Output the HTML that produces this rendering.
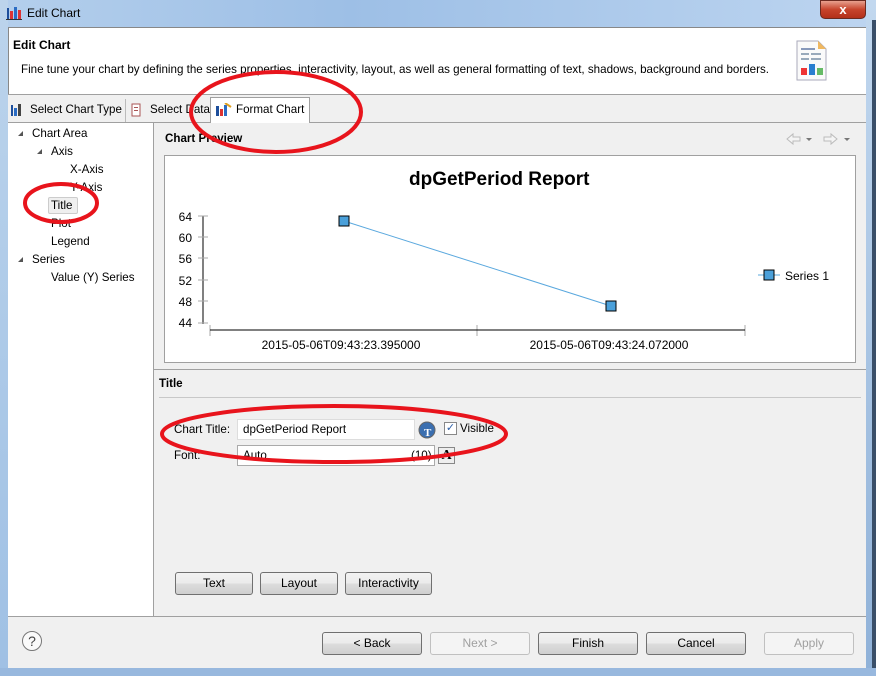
<!DOCTYPE html>
<html><head><meta charset="utf-8"><style>
*{margin:0;padding:0;box-sizing:border-box}
body{width:876px;height:676px;position:relative;overflow:hidden;font-family:"Liberation Sans","DejaVu Sans",sans-serif;font-size:12px;color:#000;background:#f0f0f0}
.a{position:absolute}
.btn{position:absolute;height:23px;border:1px solid #707070;border-radius:3px;background:linear-gradient(#f2f2f2,#ebebeb 50%,#dddddd 51%,#cfcfcf);text-align:center;line-height:21px;font-size:12px}
.dis{color:#a0a0a0;border-color:#c0c0c0;background:#f4f4f4}
.t{position:absolute;font-size:11.6px;white-space:nowrap}
.tri{position:absolute;width:0;height:0;border-left:5px solid transparent;border-bottom:5px solid #555}
</style></head><body>
<!-- frame -->
<div class="a" style="left:0;top:0;width:876px;height:27px;background:linear-gradient(90deg,#b4cfec,#9dbfe6 40%,#bdd5f0)"></div>
<div class="a" style="left:0;top:0;width:8px;height:676px;background:linear-gradient(#bcd4ec,#9fc0e4)"></div>
<div class="a" style="left:866px;top:0;width:10px;height:676px;background:linear-gradient(#c2d8ef,#8fb1d8)"></div>
<div class="a" style="left:872px;top:20px;width:4px;height:656px;background:#3a4f69"></div>
<div class="a" style="left:0;top:668px;width:876px;height:8px;background:#98b8de"></div>
<svg class="a" style="left:6px;top:5px" width="16" height="16"><rect x="1" y="3" width="2" height="12" fill="#1e4f9c"/><rect x="4" y="6" width="3" height="9" fill="#d33"/><rect x="8" y="2" width="3" height="13" fill="#2b6cc4"/><rect x="12" y="5" width="3" height="10" fill="#d33"/><rect x="0" y="14" width="16" height="1" fill="#333"/></svg>
<div class="t" style="left:27px;top:6px;font-size:12px">Edit Chart</div>
<div class="a" style="left:820px;top:0;width:46px;height:19px;border-radius:0 0 5px 5px;background:linear-gradient(#e8a08e,#c7442c 50%,#b3301a);border:1px solid #6b2a20;color:#fff;font-weight:bold;text-align:center;line-height:17px;font-size:13px">x</div>
<!-- header -->
<div class="a" style="left:8px;top:27px;width:858px;height:67px;background:#fff;border-top:1px solid #888;border-left:1px solid #888"></div>
<div class="t" style="left:13px;top:38px;font-weight:bold;font-size:12px">Edit Chart</div>
<div class="t" style="left:21px;top:63px">Fine tune your chart by defining the series properties, interactivity, layout, as well as general formatting of text, shadows, background and borders.</div>
<svg class="a" style="left:796px;top:40px" width="32" height="42"><path d="M1 1H22L30 9V40H1Z" fill="#fafafa" stroke="#aab"/><path d="M22 1V9H30" fill="#f0b860"/><rect x="5" y="8" width="14" height="2" fill="#8899bb"/><rect x="5" y="13" width="8" height="2" fill="#9ab"/><rect x="15" y="13" width="10" height="2" fill="#9ab"/><rect x="5" y="18" width="8" height="2" fill="#9ab"/><rect x="15" y="18" width="10" height="2" fill="#9ab"/><rect x="5" y="28" width="6" height="7" fill="#e33"/><rect x="13" y="24" width="6" height="11" fill="#2a7fd0"/><rect x="21" y="28" width="6" height="7" fill="#6b6"/></svg>
<div class="a" style="left:8px;top:94px;width:858px;height:1px;background:#a0a0a0"></div>
<!-- tabs -->
<div class="a" style="left:8px;top:122px;width:858px;height:1px;background:#a0a0a0"></div>
<div class="a" style="left:210px;top:97px;width:100px;height:26px;background:#fff;border:1px solid #a0a0a0;border-bottom:none"></div>
<div class="a" style="left:125px;top:99px;width:1px;height:23px;background:#bbb"></div>
<svg class="a" style="left:11px;top:103px" width="14" height="14"><rect x="0" y="2" width="2" height="11" fill="#1e4f9c"/><rect x="3" y="5" width="3" height="8" fill="#2b6cc4"/><rect x="7" y="1" width="3" height="12" fill="#444"/></svg>
<div class="t" style="left:30px;top:103px">Select Chart Type</div>
<svg class="a" style="left:131px;top:103px" width="14" height="14"><rect x="1" y="1" width="8" height="12" fill="#fff" stroke="#a55"/><rect x="3" y="4" width="4" height="1" fill="#a55"/><rect x="3" y="7" width="4" height="1" fill="#a55"/></svg>
<div class="t" style="left:150px;top:103px">Select Data</div>
<svg class="a" style="left:216px;top:103px" width="16" height="14"><rect x="0" y="3" width="3" height="10" fill="#1e4f9c"/><rect x="4" y="6" width="3" height="7" fill="#d33"/><rect x="8" y="2" width="3" height="11" fill="#2b6cc4"/><path d="M9 0L15 4" stroke="#e0a020" stroke-width="2"/></svg>
<div class="t" style="left:236px;top:103px">Format Chart</div>
<!-- tree -->
<div class="a" style="left:8px;top:123px;width:146px;height:494px;background:#fff;border-right:1px solid #a0a0a0"></div>
<div class="tri" style="left:18px;top:131px"></div>
<div class="t" style="left:32px;top:127px">Chart Area</div>
<div class="tri" style="left:37px;top:149px"></div>
<div class="t" style="left:51px;top:145px">Axis</div>
<div class="t" style="left:70px;top:163px">X-Axis</div>
<div class="t" style="left:70px;top:181px">Y-Axis</div>
<div class="a" style="left:48px;top:197px;width:30px;height:17px;background:#efefef;border:1px solid #ccc;border-radius:2px"></div>
<div class="t" style="left:51px;top:199px">Title</div>
<div class="t" style="left:51px;top:217px">Plot</div>
<div class="t" style="left:51px;top:235px">Legend</div>
<div class="tri" style="left:18px;top:257px"></div>
<div class="t" style="left:32px;top:253px">Series</div>
<div class="t" style="left:51px;top:271px">Value (Y) Series</div>
<!-- chart preview -->
<div class="t" style="left:165px;top:132px;font-weight:bold">Chart Preview</div>
<svg class="a" style="left:784px;top:131px" width="70" height="16"><path d="M3 8L9 3V6H16V10H9V13Z" fill="#f4f4f4" stroke="#bbb"/><path d="M22 7H28L25 10Z" fill="#777"/><path d="M53 8L47 3V6H40V10H47V13Z" fill="#f4f4f4" stroke="#bbb"/><path d="M60 7H66L63 10Z" fill="#777"/></svg>
<div class="a" style="left:164px;top:155px;width:692px;height:208px;background:#fff;border:1px solid #a0a0a0"></div>
<div class="t" style="left:409px;top:169px;font-size:19px;font-weight:bold">dpGetPeriod Report</div>
<svg class="a" style="left:164px;top:155px" width="692" height="208" font-family="Liberation Sans,sans-serif" font-size="12">
<line x1="39" y1="61" x2="39" y2="169" stroke="#000"/>
<g stroke="#aaa"><line x1="34" y1="61" x2="44" y2="61"/><line x1="34" y1="82" x2="44" y2="82"/><line x1="34" y1="103" x2="44" y2="103"/><line x1="34" y1="125" x2="44" y2="125"/><line x1="34" y1="146" x2="44" y2="146"/><line x1="34" y1="168" x2="44" y2="168"/><line x1="46" y1="170" x2="46" y2="181"/><line x1="313" y1="170" x2="313" y2="181"/><line x1="581" y1="170" x2="581" y2="181"/></g>
<line x1="46" y1="175" x2="581" y2="175" stroke="#000"/>
<g text-anchor="end"><text x="28" y="66">64</text><text x="28" y="87">60</text><text x="28" y="108">56</text><text x="28" y="130">52</text><text x="28" y="151">48</text><text x="28" y="172">44</text></g>
<text x="177" y="194" text-anchor="middle">2015-05-06T09:43:23.395000</text>
<text x="445" y="194" text-anchor="middle">2015-05-06T09:43:24.072000</text>
<line x1="180" y1="66" x2="447" y2="151" stroke="#5aa8de"/>
<rect x="175" y="61" width="10" height="10" fill="#4aa0da" stroke="#000"/>
<rect x="442" y="146" width="10" height="10" fill="#4aa0da" stroke="#000"/>
<line x1="594" y1="120" x2="616" y2="120" stroke="#5aa8de"/>
<rect x="600" y="115" width="10" height="10" fill="#4aa0da" stroke="#000"/>
<text x="621" y="125">Series 1</text>
</svg>
<!-- title section -->
<div class="a" style="left:154px;top:369px;width:712px;height:1px;background:#a0a0a0"></div>
<div class="t" style="left:159px;top:377px;font-weight:bold">Title</div>
<div class="a" style="left:159px;top:397px;width:702px;height:1px;background:#c8c8c8"></div>
<div class="t" style="left:174px;top:423px">Chart Title:</div>
<div class="a" style="left:237px;top:419px;width:178px;height:21px;background:#fff;border:1px solid #ddd"></div>
<div class="t" style="left:243px;top:423px">dpGetPeriod Report</div>
<svg class="a" style="left:417px;top:420px" width="20" height="20"><circle cx="10" cy="10" r="8" fill="#3b6fb0" stroke="#666"/><text x="7" y="16" font-size="11" font-weight="bold" fill="#fff" font-family="Liberation Serif">T</text></svg>
<div class="a" style="left:444px;top:422px;width:13px;height:13px;background:#fff;border:1px solid #888;color:#2c5fa8;font-size:11px;line-height:11px;text-align:center">✓</div>
<div class="t" style="left:460px;top:422px">Visible</div>
<div class="t" style="left:174px;top:449px">Font:</div>
<div class="a" style="left:237px;top:445px;width:198px;height:21px;background:#fff;border:1px solid #aaa"></div>
<div class="t" style="left:243px;top:449px">Auto</div>
<div class="t" style="left:411px;top:449px">(10)</div>
<div class="a" style="left:438px;top:447px;width:17px;height:17px;border:1px solid #888;background:#eee;font-family:'Liberation Serif';font-weight:bold;font-size:14px;text-align:center;line-height:15px">A</div>
<div class="btn" style="left:175px;top:572px;width:78px">Text</div>
<div class="btn" style="left:260px;top:572px;width:78px">Layout</div>
<div class="btn" style="left:345px;top:572px;width:87px">Interactivity</div>
<!-- bottom -->
<div class="a" style="left:8px;top:616px;width:858px;height:1px;background:#a0a0a0"></div>
<div class="a" style="left:22px;top:631px;width:20px;height:20px;border:1px solid #777;border-radius:50%;text-align:center;line-height:18px;font-size:14px;color:#444;background:#fafafa">?</div>
<div class="btn" style="left:322px;top:632px;width:100px">&lt; Back</div>
<div class="btn dis" style="left:430px;top:632px;width:100px">Next &gt;</div>
<div class="btn" style="left:538px;top:632px;width:100px">Finish</div>
<div class="btn" style="left:646px;top:632px;width:100px">Cancel</div>
<div class="btn dis" style="left:764px;top:632px;width:90px">Apply</div>
<!-- red ellipses -->
<svg class="a" style="left:0;top:0" width="876" height="676"><g fill="none" stroke="#e8141c" stroke-width="4"><ellipse cx="276" cy="112" rx="85" ry="40"/><ellipse cx="61" cy="203" rx="36" ry="19"/><ellipse cx="334" cy="434" rx="172" ry="28"/></g></svg>
</body></html>
